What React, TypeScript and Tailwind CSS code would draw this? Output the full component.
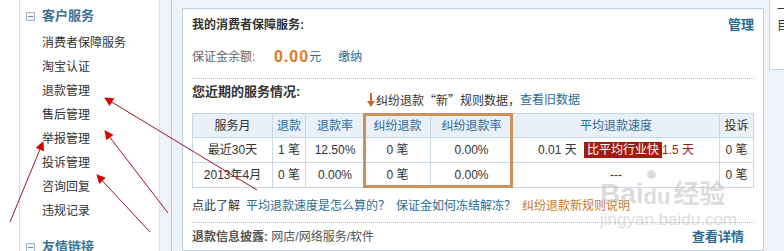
import React from 'react';

const sideItems = ['消费者保障服务', '淘宝认证', '退款管理', '售后管理', '举报管理', '投诉管理', '咨询回复', '违规记录'];

const MinusBox: React.FC = () => (
  <span className="w-[9px] h-[9px] border border-[#a9b8c6] bg-[#f3f6f9] flex items-center justify-center shrink-0">
    <span className="w-[5px] h-px bg-[#7c8c9b]" />
  </span>
);

const Sidebar: React.FC = () => (
  <div className="w-[140px] shrink-0 bg-white border-r border-[#dde6ef] pl-[6px]">
    <div className="mt-[6px] h-[20px] flex items-center gap-[7px]">
      <MinusBox />
      <span className="text-[13px] font-bold text-[#3d7394]">客户服务</span>
    </div>
    <ul className="mt-[5px] pl-[16px]">
      {sideItems.map((t) => (
        <li key={t} className="h-[24px] leading-[24px] text-[#333]">
          {t}
        </li>
      ))}
    </ul>
    <div className="mt-[14px] h-[20px] flex items-center gap-[7px]">
      <MinusBox />
      <span className="text-[13px] font-bold text-[#3d7394]">友情链接</span>
    </div>
  </div>
);

const th = 'h-[24px] border border-[#c9d8e7] bg-[#e9f0f8] font-normal text-center';
const td = 'h-[25px] border border-[#c9d8e7] text-center text-[#333]';

const ServiceTable: React.FC = () => (
  <div className="relative w-[561px]">
    <table className="w-[561px] table-fixed border-collapse">
      <colgroup>
        <col className="w-[80px]" />
        <col className="w-[33px]" />
        <col className="w-[59px]" />
        <col className="w-[66px]" />
        <col className="w-[82px]" />
        <col className="w-[207px]" />
        <col className="w-[34px]" />
      </colgroup>
      <thead>
        <tr>
          <th className={`${th} text-[#333]`}>服务月</th>
          <th className={`${th} text-[#2c6a99]`}>退款</th>
          <th className={`${th} text-[#2c6a99]`}>退款率</th>
          <th className={`${th} text-[#2c6a99]`}>纠纷退款</th>
          <th className={`${th} text-[#2c6a99]`}>纠纷退款率</th>
          <th className={`${th} text-[#2c6a99]`}>平均退款速度</th>
          <th className={`${th} text-[#333]`}>投诉</th>
        </tr>
      </thead>
      <tbody>
        <tr>
          <td className={td}>最近30天</td>
          <td className={td}>1 笔</td>
          <td className={td}>12.50%</td>
          <td className={td}>0 笔</td>
          <td className={td}>0.00%</td>
          <td className={td}>
            <span>0.01 天 </span>
            <span className="ml-[4px] px-[3px] py-[1px] bg-[#a31c10] text-white">比平均行业快</span>
            <span className="text-[#a31c10]">1.5 天</span>
          </td>
          <td className={td}>0 笔</td>
        </tr>
        <tr>
          <td className={td}>2013年4月</td>
          <td className={td}>0 笔</td>
          <td className={td}>0.00%</td>
          <td className={td}>0 笔</td>
          <td className={td}>0.00%</td>
          <td className={td}>---</td>
          <td className={td}>0 笔</td>
        </tr>
      </tbody>
    </table>
    <div className="absolute left-[171px] top-0 bottom-0 w-[150px] border-[3px] border-[#cc9158] pointer-events-none" />
  </div>
);

const MainPanel: React.FC = () => (
  <div className="w-[582px] shrink-0 mt-[8px] bg-white border border-[#bfd2e4] px-[9px]">
    <div className="mt-[6px] h-[20px] flex items-center justify-between">
      <span className="font-bold text-[#333]">我的消费者保障服务:</span>
      <span className="font-bold text-[13px] text-[#2a6c93]">管理</span>
    </div>
    <div className="mt-[12px] h-[20px] flex items-center">
      <span className="text-[#666] w-[82px]">保证金余额:</span>
      <span className="text-[16px] font-bold text-[#e07b1f] tracking-[1px]">0.00</span>
      <span className="text-[#2a6c93]">元</span>
      <span className="ml-[17px] text-[#2a6c93]">缴纳</span>
    </div>
    <div className="mt-[11px] border-t border-dotted border-[#bcbcbc]" />
    <div className="mt-[5px] h-[29px] flex">
      <span className="w-[175px] h-[16px] leading-[16px] font-bold text-[13px] text-[#333] self-start">您近期的服务情况:</span>
      <span className="self-end mb-[6px] h-[14px] leading-[14px] flex items-center">
        <svg width="8" height="14" viewBox="0 0 8 14" className="mr-[1px]">
          <rect x="3" y="0" width="2" height="9" fill="#d2672b" />
          <path d="M0 8 L8 8 L4 14 Z" fill="#d2672b" />
        </svg>
        <span className="text-[#333] font-['Noto_Sans_CJK_SC',sans-serif]">纠纷退款“新”规则数据，</span>
        <span className="text-[#2a6c93]">查看旧数据</span>
      </span>
    </div>
    <ServiceTable />
    <div className="mt-[8px] h-[20px] flex items-center gap-[6px]">
      <span className="text-[#333]">点此了解</span>
      <span className="text-[#2a6c93]">平均退款速度是怎么算的？</span>
      <span className="text-[#2a6c93]">保证金如何冻结解冻？</span>
      <span className="text-[#c57a2a]">纠纷退款新规则说明</span>
    </div>
    <div className="mt-[6px] border-t border-dotted border-[#bcbcbc]" />
    <div className="mt-[6px] h-[16px] flex items-center justify-between pr-[10px]">
      <span className="text-[#555]">
        <span className="font-bold">退款信息披露:</span> 网店/网络服务/软件
      </span>
      <span className="font-bold text-[13px] text-[#2a6c93]">查看详情</span>
    </div>
  </div>
);

const Arrows: React.FC = () => (
  <svg className="absolute inset-0 pointer-events-none" width="784" height="251" viewBox="0 0 784 251">
    <defs>
      <marker id="ah" viewBox="0 0 10 10" refX="9" refY="5" markerWidth="11" markerHeight="9" markerUnits="userSpaceOnUse" orient="auto">
        <path d="M0 0 L10 5 L0 10 Z" fill="#d80000" />
      </marker>
    </defs>
    <g stroke="#9c1424" strokeWidth="1" fill="none" markerEnd="url(#ah)">
      <line x1="257" y1="190" x2="105" y2="98" />
      <line x1="168" y1="213" x2="105" y2="131" />
      <line x1="150" y1="232" x2="97" y2="175" />
      <line x1="10" y1="222" x2="43" y2="142" />
    </g>
  </svg>
);

const Watermark: React.FC = () => (
  <div className="absolute left-[600px] top-[160px] pointer-events-none text-[#bdbdbd] opacity-50 font-['Liberation_Sans','Noto_Sans_CJK_SC',sans-serif]">
    <div className="flex items-end h-[48px]">
      <span className="text-[28px] leading-[28px] font-bold">Bai</span>
      <span className="relative text-[22px] leading-[22px] font-bold">
        <span className="absolute left-[2px] -top-[24px] text-[20px]">●</span>du
      </span>
      <span className="ml-[3px] text-[26px] leading-[28px] font-bold">经验</span>
    </div>
    <div className="text-[17px] leading-[20px] mt-[2px]">jingyan.baidu.com</div>
  </div>
);

const App: React.FC = () => {
  return (
    <div className="relative w-[784px] h-[251px] overflow-hidden bg-[#eef3fa] flex text-[12px] text-[#333] font-['Liberation_Sans','Noto_Sans_CJK_SC',sans-serif]">
      <div className="w-[20px] shrink-0 bg-white border-r border-[#d3dfeb]" />
      <Sidebar />
      <div className="w-[22px] shrink-0 flex">
        <div className="w-[11px]" />
        <div className="w-px bg-[#b7cbe0]" />
      </div>
      <MainPanel />
      <div className="ml-[5px] w-[30px] h-[70px] shrink-0 bg-white border-l border-b border-[#c8d6e4] pl-[7px] pt-[2px] text-[#333] leading-[16px]">
        <div>一</div>
        <div>目</div>
      </div>
      <Watermark />
      <Arrows />
    </div>
  );
};

export default App;
